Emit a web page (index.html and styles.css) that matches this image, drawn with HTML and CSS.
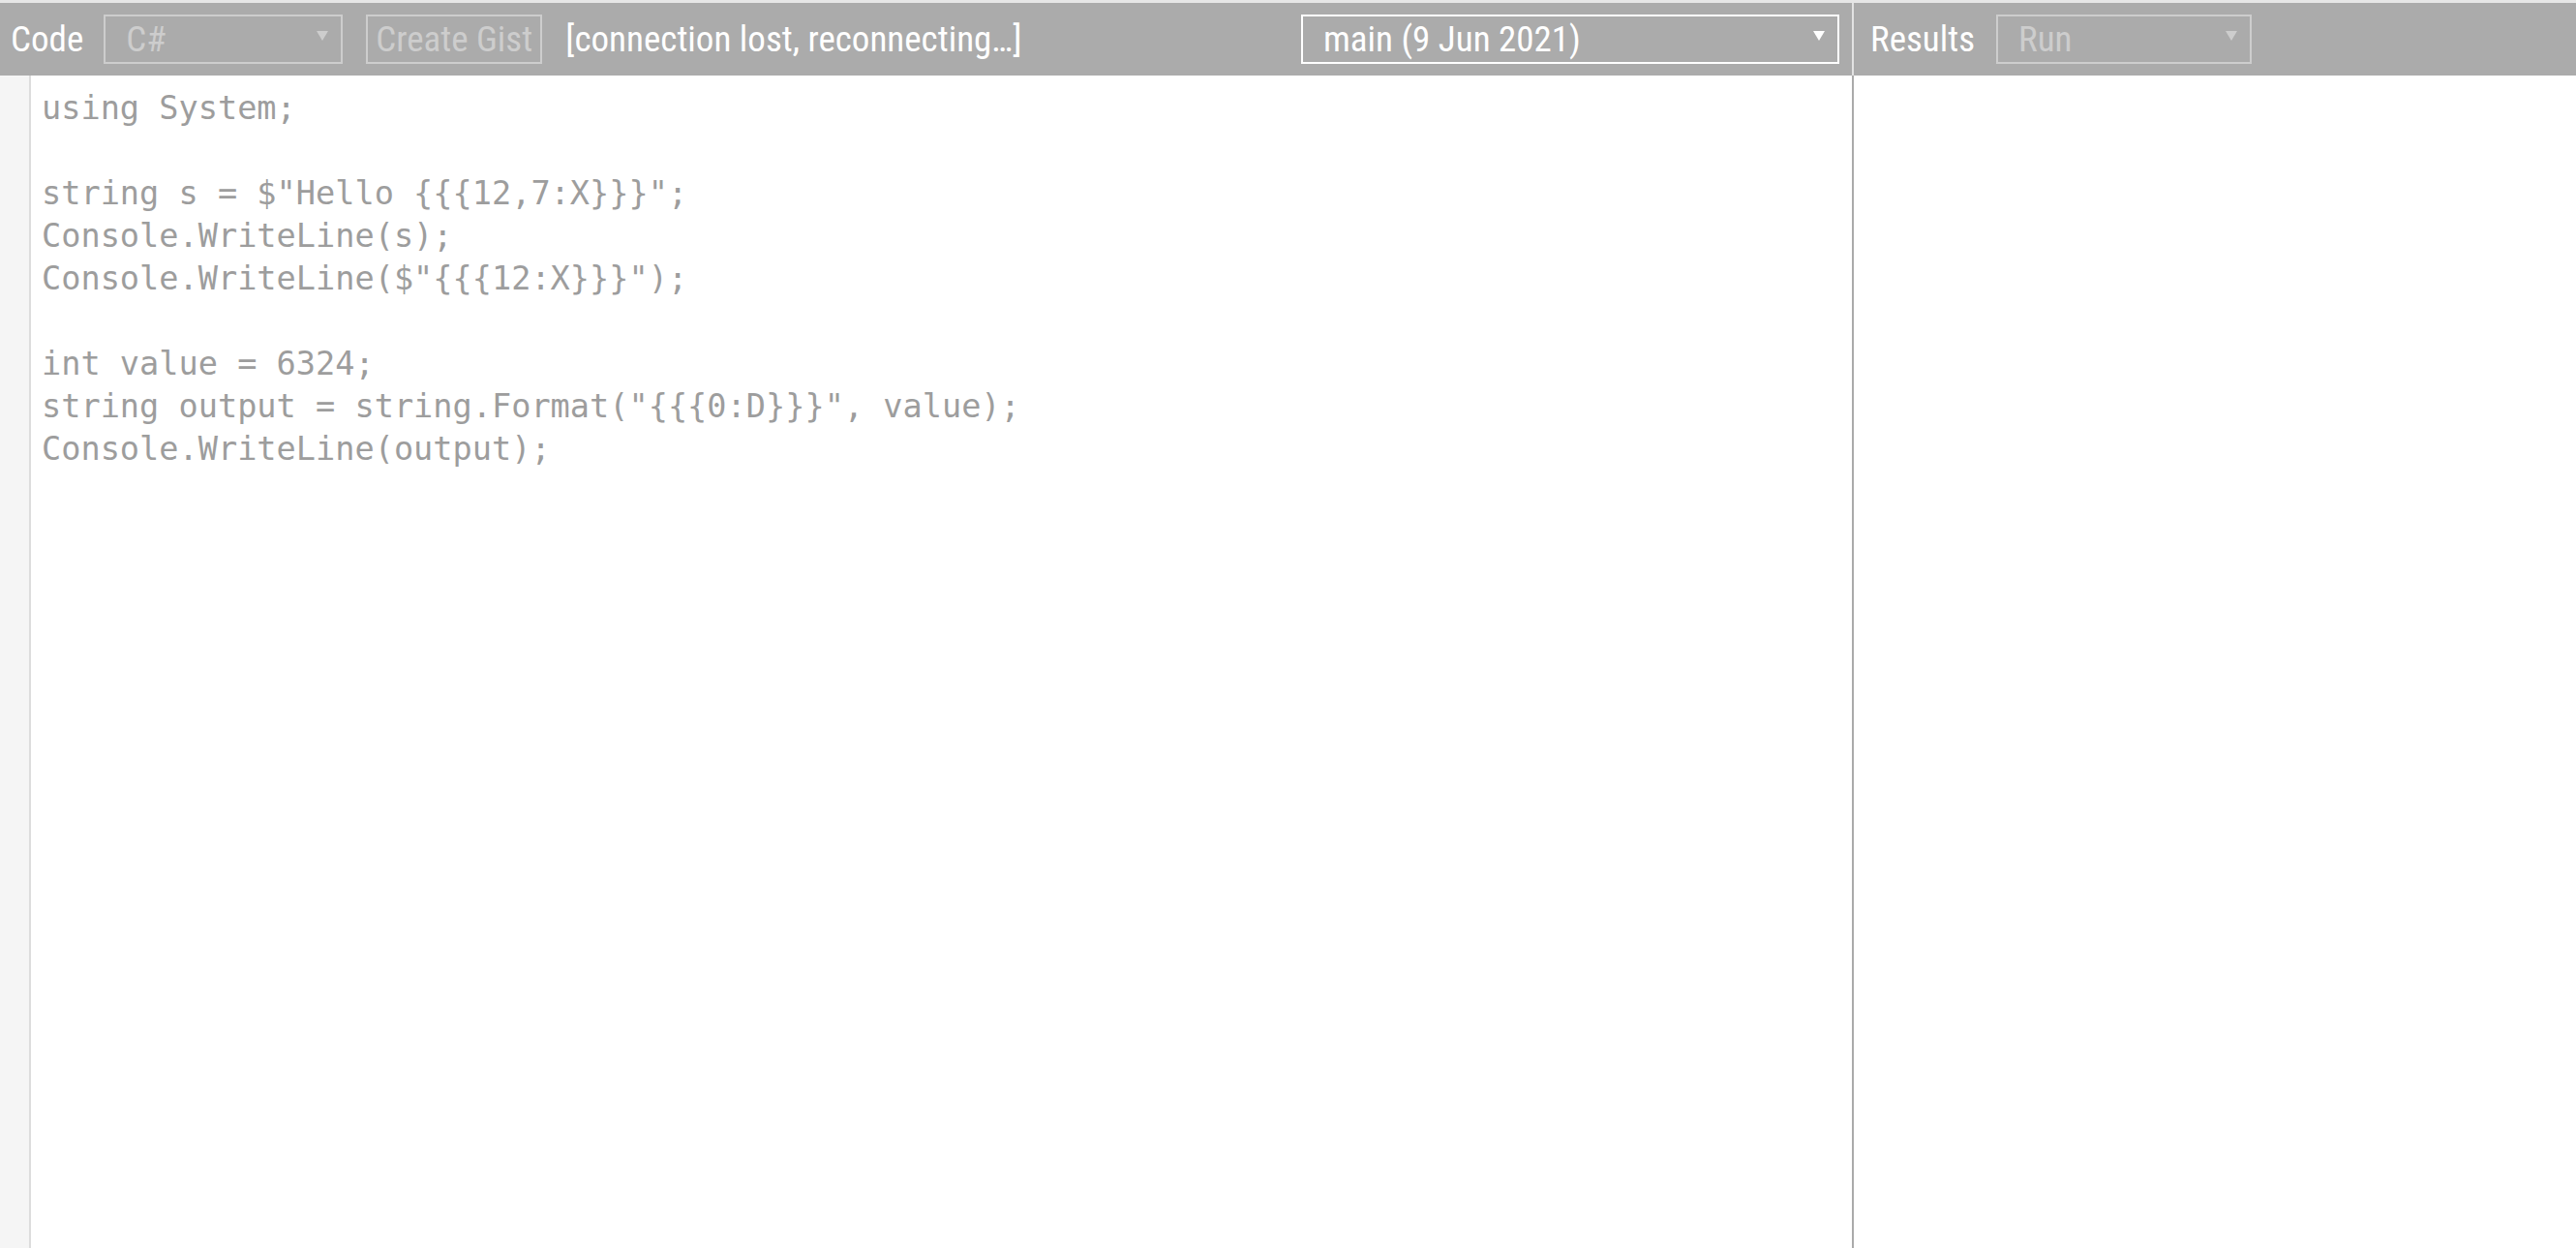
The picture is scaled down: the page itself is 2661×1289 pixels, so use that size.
FILE: index.html
```html
<!DOCTYPE html>
<html lang="en">
<head>
    <meta charset="UTF-8">
    <meta name="viewport" content="width=device-width, initial-scale=1.0">
    <title>SharpLab</title>
    <link rel="stylesheet" href="styles.css">
</head>
<body>
    <div class="app">
        <div class="pane code-pane">
            <div class="bar">
                <span class="bar-title">Code</span>
                <div class="select disabled select-lang">C#</div>
                <button class="gist-btn" disabled>Create Gist</button>
                <span class="status">[connection lost, reconnecting…]</span>
                <div class="select select-branch">main (9 Jun 2021)</div>
            </div>
            <div class="editor">
                <div class="gutter"></div>
<pre class="code">using System;

string s = $"Hello {{{12,7:X}}}";
Console.WriteLine(s);
Console.WriteLine($"{{{12:X}}}");

int value = 6324;
string output = string.Format("{{{0:D}}}", value);
Console.WriteLine(output);</pre>
            </div>
        </div>

        <div class="pane results-pane">
            <div class="bar">
                <span class="bar-title">Results</span>
                <div class="select disabled select-mode">Run</div>
            </div>
            <div class="output"></div>
        </div>
    </div>
</body>
</html>
```

FILE: styles.css
```css
:root {
    --bar-color: #ababab;
    --muted: #cdcdcd;
    --code-color: #9d9d9d;
}

* {
    margin: 0;
    padding: 0;
    box-sizing: border-box;
}

html, body {
    height: 100%;
}

body {
    background: #fff;
    font-family: 'Roboto Condensed', 'Liberation Sans Narrow', 'DejaVu Sans Condensed', Roboto, sans-serif;
    overflow: hidden;
}

.app {
    display: flex;
    height: 100%;
    border-top: 3px solid #e6e6e6;
}

.pane {
    display: flex;
    flex-direction: column;
    min-height: 0;
}

.code-pane {
    width: 1913px;
    flex-shrink: 0;
}

.results-pane {
    flex: 1;
    border-left: 2px solid #aaa;
}

.bar {
    display: flex;
    align-items: center;
    gap: 24px;
    height: 75px;
    padding: 0 13px 0 11px;
    background-color: var(--bar-color);
    color: white;
    font-size: 37px;
    white-space: nowrap;
}

.results-pane .bar {
    gap: 22px;
    margin-left: -2px;
    border-left: 2px solid #e2e2e2;
    padding-left: 17px;
}

.bar-title {
    line-height: 1;
}

.code-pane .bar-title {
    margin-right: -3px;
}

.select {
    position: relative;
    height: 51px;
    border: 2px solid white;
    padding: 0 40px 0 21px;
    display: flex;
    align-items: center;
    line-height: 1;
}

.select::after {
    content: '';
    position: absolute;
    right: 13px;
    top: 15px;
    border-left: 6px solid transparent;
    border-right: 6px solid transparent;
    border-top: 10px solid white;
}

.select.disabled {
    border-color: var(--muted);
    color: var(--muted);
}

.select.disabled::after {
    border-top-color: var(--muted);
}

.select-lang {
    width: 247px;
}

.select-branch {
    width: 556px;
    margin-left: auto;
}

.select-mode {
    width: 264px;
}

.gist-btn {
    height: 51px;
    padding: 0 8px;
    background: transparent;
    border: 2px solid var(--muted);
    color: var(--muted);
    font-family: inherit;
    font-size: 37px;
    line-height: 1;
}

.editor {
    flex: 1;
    display: flex;
}

.gutter {
    width: 32px;
    background: #f5f5f5;
    border-right: 2px solid #dcdcdc;
}

.code {
    padding: 12px 0 0 11px;
    font-family: 'DejaVu Sans Mono', 'Liberation Mono', monospace;
    font-size: 33.6px;
    line-height: 44px;
    color: var(--code-color);
}

.output {
    flex: 1;
}
```
